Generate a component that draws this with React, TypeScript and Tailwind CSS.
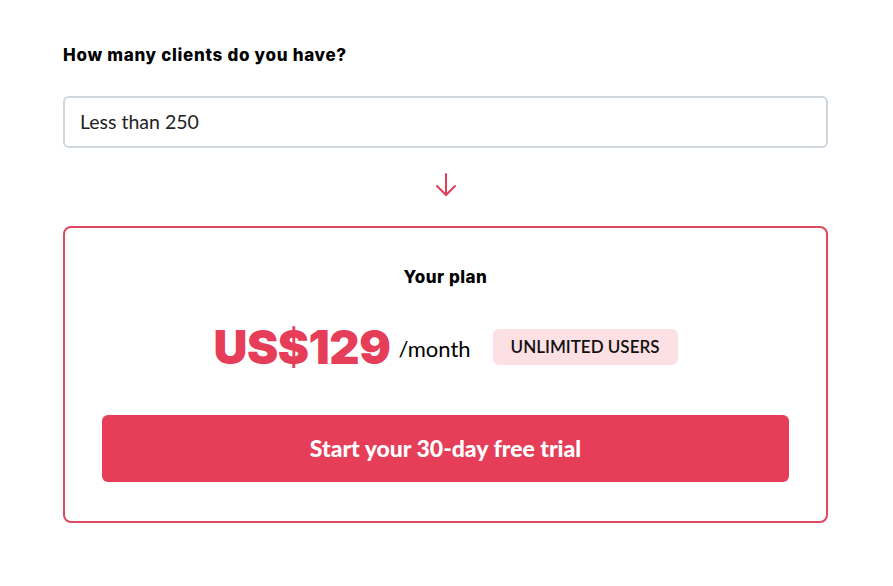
export default function App() {
  return (
    <div className="min-h-screen bg-white px-[63px] pt-[44px]" style={{ fontFamily: "Lato, 'Liberation Sans', sans-serif" }}>
      <div className="w-[765px]">
        <h2 className="text-[17px] font-extrabold leading-[22px] tracking-[0.7px] text-black" style={{ fontFamily: "Inter, 'Noto Sans', sans-serif" }}>
          How many clients do you have?
        </h2>

        <div className="mt-[30px] flex h-[52px] items-center rounded-[6px] border-2 border-[#cfd6de] px-[15px] text-[19.5px] text-[#222]">
          Less than 250
        </div>

        <div className="flex justify-center pt-[24px] pb-[28px]">
          <svg width="24" height="26" viewBox="0 0 24 26" fill="none" stroke="#e23e57" strokeWidth="2" strokeLinecap="round" strokeLinejoin="round">
            <path d="M12 2v21" />
            <path d="M3 14l9 9 9-9" />
          </svg>
        </div>

        <div className="rounded-[8px] border-2 border-[#e0485f] px-[37px] pt-[38px] pb-[39px]">
          <p className="text-center text-[17px] font-extrabold leading-[22px] tracking-[0.5px] text-black" style={{ fontFamily: "Inter, 'Noto Sans', sans-serif" }}>
            Your plan
          </p>
          <div className="mt-[31px] flex items-center justify-center">
            <span className="text-[47px] font-black leading-[56px] tracking-[-0.5px] text-[#e63e59]" style={{ fontFamily: "Inter, 'Noto Sans', sans-serif" }}>
              US$129
            </span>
            <span className="ml-[8px] mt-[2px] text-[22px] text-black">/month</span>
            <span className="ml-[22px] rounded-[6px] bg-[#fde0e4] px-[18px] py-[7px] text-[17px] font-semibold leading-[22px] text-[#111]">
              UNLIMITED USERS
            </span>
          </div>
          <button className="mt-[40px] flex h-[67px] w-full items-center justify-center rounded-[6px] bg-[#e63e59] text-[23px] font-black text-white">
            Start your 30-day free trial
          </button>
        </div>
      </div>
    </div>
  );
}
